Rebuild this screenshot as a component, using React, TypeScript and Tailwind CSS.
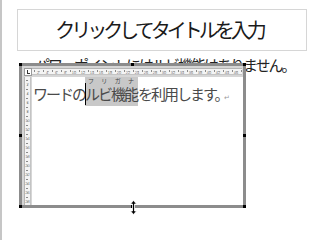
import React from "react";

const hTicks = Array.from({ length: 47 }, (_, i) => i);
const hNums = Array.from({ length: 23 }, (_, i) => (i + 1) * 2);
const vNums = Array.from({ length: 14 }, (_, i) => (i + 1) * 2);

function HRuler() {
  return (
    <svg width="210" height="11" viewBox="0 0 210 11">
      <rect x="0" y="0" width="210" height="11" fill="#d6d6d6" />
      <rect x="0" y="2" width="210" height="7" fill="#f4f4f4" />
      <rect x="0" y="2" width="210" height="1" fill="#b4b4b4" />
      <rect x="0" y="8" width="210" height="1" fill="#c4c4c4" />
      {hTicks.map((i) => (
        <rect key={i} x={2 + i * 4.5} y={i % 2 ? 5 : 4} width="1" height={i % 2 ? 1 : 2} fill="#8a8a8a" />
      ))}
      {hNums.map((n, i) => (
        <text key={n} x={6 + i * 9} y="7.5" fontSize="4" fill="#7a7a7a" textAnchor="middle" fontFamily="Liberation Sans, sans-serif">
          {n}
        </text>
      ))}
    </svg>
  );
}

function VRuler() {
  return (
    <svg width="10" height="128" viewBox="0 0 10 128">
      <rect x="0" y="0" width="10" height="128" fill="#d6d6d6" />
      <rect x="2" y="0" width="7" height="128" fill="#f4f4f4" />
      <rect x="2" y="0" width="1" height="128" fill="#b4b4b4" />
      <rect x="8" y="0" width="1" height="128" fill="#c4c4c4" />
      {Array.from({ length: 28 }, (_, i) => (
        <rect key={i} x={i % 2 ? 5 : 4} y={3 + i * 4.5} width={i % 2 ? 1 : 2} height="1" fill="#8a8a8a" />
      ))}
      {vNums.map((n, i) => (
        <text key={n} x="5.5" y={9 + i * 9} fontSize="4" fill="#7a7a7a" textAnchor="middle" fontFamily="Liberation Sans, sans-serif">
          {n}
        </text>
      ))}
    </svg>
  );
}

function Handle({ className }: { className: string }) {
  return <div className={`absolute h-[3px] w-[3px] bg-black ${className}`} />;
}

export default function App() {
  return (
    <div className="relative h-[240px] w-[320px] overflow-hidden border-l-2 border-[#c6c6c6] bg-white font-['Noto_Sans_CJK_JP','Noto_Sans',sans-serif] text-[#1a1a1a]">
      {/* title placeholder */}
      <div className="ml-[15px] mt-[9px] flex h-[42px] w-[290px] items-center justify-center border border-[#d6d6d6] pr-[6px] text-[20px] tracking-[-4px]">
        クリックしてタイトルを入力
      </div>

      {/* body text, mostly hidden under the embedded object */}
      <p className="ml-[33px] mt-[5px] whitespace-nowrap text-[15px] leading-[18px] tracking-[-2px] text-[#222]">
        パワーポイントにはルビ機能はありません。
      </p>

      {/* embedded word object */}
      <div className="absolute left-[17px] top-[63px] h-[145px] w-[227px]">
        <div className="flex h-full w-full flex-col border-[3px] border-[#8c8c8c] bg-[#d6d6d6]">
          <div className="flex h-[11px]">
            <div className="w-[10px] pl-[2px] pt-[2px]">
              <div className="relative h-[8px] w-[8px] border border-[#9a9a9a] bg-white">
                <div className="absolute left-[2px] top-[1px] h-[4px] w-px bg-[#333]" />
                <div className="absolute left-[2px] top-[4px] h-px w-[3px] bg-[#333]" />
              </div>
            </div>
            <HRuler />
          </div>
          <div className="flex flex-1 overflow-hidden">
            <VRuler />
            <div className="flex-1 bg-white pl-[1px]">
              <div className="flex items-end whitespace-nowrap text-[15px] tracking-[-2px] text-[#4a4a4a]">
                <span className="pb-[3px] leading-[18px]">ワードの</span>
                <span className="relative flex flex-col bg-[#c8c8c8] pb-[3px] pr-[1px]">
                  <span className="flex h-[8px] justify-between px-[3px] text-[6px] leading-[8px] tracking-normal text-[#444]">
                    <span>フ</span>
                    <span>リ</span>
                    <span>ガ</span>
                    <span>ナ</span>
                  </span>
                  <span className="leading-[18px]">ルビ機能</span>
                  <span className="absolute left-0 top-[6px] h-[22px] w-px bg-black" />
                </span>
                <span className="pb-[3px] leading-[18px]">を利用します。</span>
                <span className="-ml-[4px] pb-[5px] text-[7px] leading-[8px] tracking-normal text-[#9a9a9a]">↵</span>
              </div>
            </div>
          </div>
        </div>
        <Handle className="left-0 top-0" />
        <Handle className="left-[112px] top-0" />
        <Handle className="right-0 top-0" />
        <Handle className="left-0 top-[71px]" />
        <Handle className="right-0 top-[71px]" />
        <Handle className="bottom-0 left-0" />
        <Handle className="bottom-0 left-[112px]" />
        <Handle className="bottom-0 right-0" />
      </div>

      {/* resize cursor */}
      <svg className="absolute left-[128px] top-[200px]" width="7" height="15" viewBox="0 0 7 15">
        <path d="M3.5 0.5 L6.5 4 L4.5 4 L4.5 11 L6.5 11 L3.5 14.5 L0.5 11 L2.5 11 L2.5 4 L0.5 4 Z" fill="#000" stroke="#fff" strokeWidth="0.8" />
      </svg>
    </div>
  );
}
